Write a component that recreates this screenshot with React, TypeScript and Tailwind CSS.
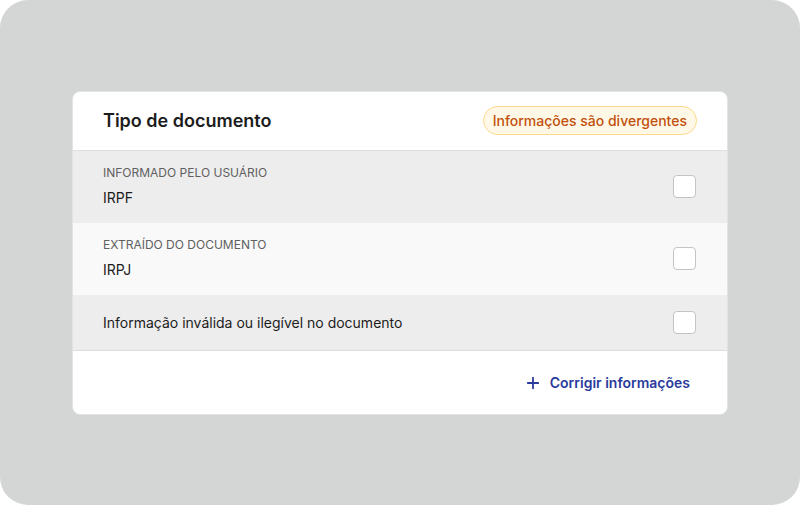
import { Plus } from "lucide-react";

type Row = { label?: string; value: string; shade: string };

const rows: Row[] = [
  { label: "Informado pelo usuário", value: "IRPF", shade: "bg-[#ededed]" },
  { label: "Extraído do documento", value: "IRPJ", shade: "bg-[#f9f9f9]" },
  { value: "Informação inválida ou ilegível no documento", shade: "bg-[#ededed]" },
];

function Checkbox() {
  return (
    <button
      type="button"
      aria-label="Selecionar"
      className="h-[23px] w-[23px] shrink-0 rounded-[4px] border border-[#c4c4c4] bg-white"
    />
  );
}

export default function App() {
  return (
    <div className="h-[505px] w-[800px] bg-white font-['Inter',sans-serif]">
      <div className="flex h-full w-full items-center justify-center rounded-[28px] bg-[#d3d6d5]">
        <div className="w-[656px] overflow-hidden rounded-lg border border-[#e2e4e3] bg-white">
          <div className="flex h-[59px] items-center justify-between border-b border-[#dedede] pl-[30px] pr-[30px]">
            <h2 className="text-lg font-semibold text-[#1c1c1c]">Tipo de documento</h2>
            <span className="flex h-[29px] items-center rounded-full border border-[#fbd98c] bg-[#fff8e6] px-[9px] text-sm font-medium text-[#c2500d]">
              Informações são divergentes
            </span>
          </div>

          {rows.map((row) => (
            <div
              key={row.value}
              className={`flex items-center justify-between pl-[30px] pr-[31px] ${row.shade} ${
                row.label ? "h-[72px]" : "h-[56px] border-b border-[#dedede]"
              }`}
            >
              <div>
                {row.label && (
                  <div className="text-xs uppercase leading-4 text-[#606060]">{row.label}</div>
                )}
                <div className={`text-sm leading-5 text-[#1c1c1c] ${row.label ? "mt-[7px]" : "pt-[2px]"}`}>
                  {row.value}
                </div>
              </div>
              <Checkbox />
            </div>
          ))}

          <div className="flex h-[63px] items-center justify-end pr-[37px] pt-[2px]">
            <button type="button" className="flex items-center gap-[8px] text-sm font-semibold text-[#2b3b9c]">
              <Plus size={18} strokeWidth={2.4} />
              Corrigir informações
            </button>
          </div>
        </div>
      </div>
    </div>
  );
}
